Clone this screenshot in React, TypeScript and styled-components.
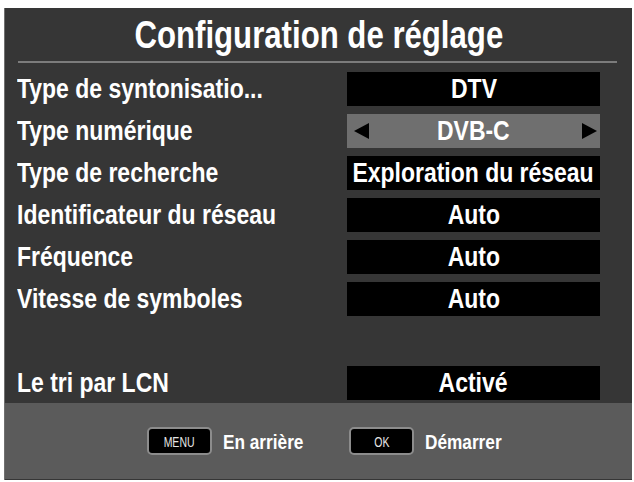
import React from "react";
import styled, { createGlobalStyle } from "styled-components";

const Global = createGlobalStyle`
  html, body { margin: 0; padding: 0; background: #ffffff; }
`;

const FONT = `"Liberation Sans", Arial, sans-serif`;

const Screen = styled.div`
  margin: 8px 2px 0 4px;
  width: 628px;
  height: 472px;
  background: #363636;
  border-left: 1px solid #707070;
  box-sizing: border-box;
  display: flex;
  flex-direction: column;
  font-family: ${FONT};
  color: #ffffff;
`;

/* Arial-Narrow-like text: Liberation Sans squeezed horizontally */
const Narrow = styled.span<{ $origin?: "left" | "center"; $scale?: number }>`
  display: inline-block;
  white-space: nowrap;
  transform: scaleX(${(p) => p.$scale ?? 0.82});
  transform-origin: ${(p) => p.$origin ?? "center"} center;
`;

const Title = styled.h1`
  margin: 0;
  height: 53px;
  display: flex;
  align-items: center;
  justify-content: center;
  font-size: 38px;
  font-weight: bold;
  line-height: 1;
`;

const Divider = styled.div`
  height: 2px;
  margin: 0 15px 0 13px;
  background: #7c7c7c;
`;

const List = styled.div`
  padding: 9px 31px 0 12px;
  display: flex;
  flex-direction: column;
  gap: 8px;
`;

const Row = styled.div`
  height: 34px;
  display: grid;
  grid-template-columns: 330px 253px;
  align-items: center;
`;

const Label = styled.div`
  font-size: 28px;
  font-weight: bold;
  line-height: 1;
`;

const Value = styled.div<{ $active?: boolean }>`
  height: 34px;
  background: ${(p) => (p.$active ? "#6f6f6f" : "#000000")};
  display: flex;
  align-items: center;
  justify-content: center;
  font-size: 28px;
  font-weight: bold;
  line-height: 1;
  position: relative;
`;

const Arrow = styled.span<{ $dir: "left" | "right" }>`
  position: absolute;
  top: 9px;
  ${(p) => (p.$dir === "left" ? "left: 7px;" : "right: 3px;")}
  width: 0;
  height: 0;
  border-top: 8px solid transparent;
  border-bottom: 8px solid transparent;
  ${(p) =>
    p.$dir === "left"
      ? "border-right: 15px solid #000;"
      : "border-left: 15px solid #000;"}
`;

const Footer = styled.div`
  margin-top: auto;
  margin-bottom: 1px;
  height: 76px;
  background: #5b5b5b;
  display: flex;
  align-items: center;
  padding-left: 142px;
  gap: 28px;
`;

const Hint = styled.div`
  display: flex;
  align-items: center;
  gap: 11px;
`;

const Key = styled.span`
  width: 65px;
  height: 28px;
  box-sizing: border-box;
  background: #000;
  border: 2px solid #8c8c8c;
  border-radius: 5px;
  display: flex;
  align-items: center;
  justify-content: center;
  font-size: 15px;
  color: #e6e6e6;
  line-height: 1;
`;

const HintText = styled.span`
  font-size: 21px;
  font-weight: bold;
  line-height: 1;
  display: flex;
`;

const rows: { label: string; value: string; active?: boolean }[] = [
  { label: "Type de syntonisatio...", value: "DTV" },
  { label: "Type numérique", value: "DVB-C", active: true },
  { label: "Type de recherche", value: "Exploration du réseau" },
  { label: "Identificateur du réseau", value: "Auto" },
  { label: "Fréquence", value: "Auto" },
  { label: "Vitesse de symboles", value: "Auto" },
];

export default function App() {
  return (
    <>
      <Global />
      <Screen>
        <Title>
          <Narrow>Configuration de réglage</Narrow>
        </Title>
        <Divider />
        <List>
          {rows.map((r) => (
            <Row key={r.label}>
              <Label>
                <Narrow $origin="left">{r.label}</Narrow>
              </Label>
              <Value $active={r.active}>
                {r.active && <Arrow $dir="left" />}
                <Narrow>{r.value}</Narrow>
                {r.active && <Arrow $dir="right" />}
              </Value>
            </Row>
          ))}
          <Row />
          <Row>
            <Label>
              <Narrow $origin="left">Le tri par LCN</Narrow>
            </Label>
            <Value>
              <Narrow>Activé</Narrow>
            </Value>
          </Row>
        </List>
        <Footer>
          <Hint>
            <Key>
              <Narrow $scale={0.7}>MENU</Narrow>
            </Key>
            <HintText>
              <Narrow $origin="left">En arrière</Narrow>
            </HintText>
          </Hint>
          <Hint>
            <Key>
              <Narrow $scale={0.7}>OK</Narrow>
            </Key>
            <HintText>
              <Narrow $origin="left">Démarrer</Narrow>
            </HintText>
          </Hint>
        </Footer>
      </Screen>
    </>
  );
}
